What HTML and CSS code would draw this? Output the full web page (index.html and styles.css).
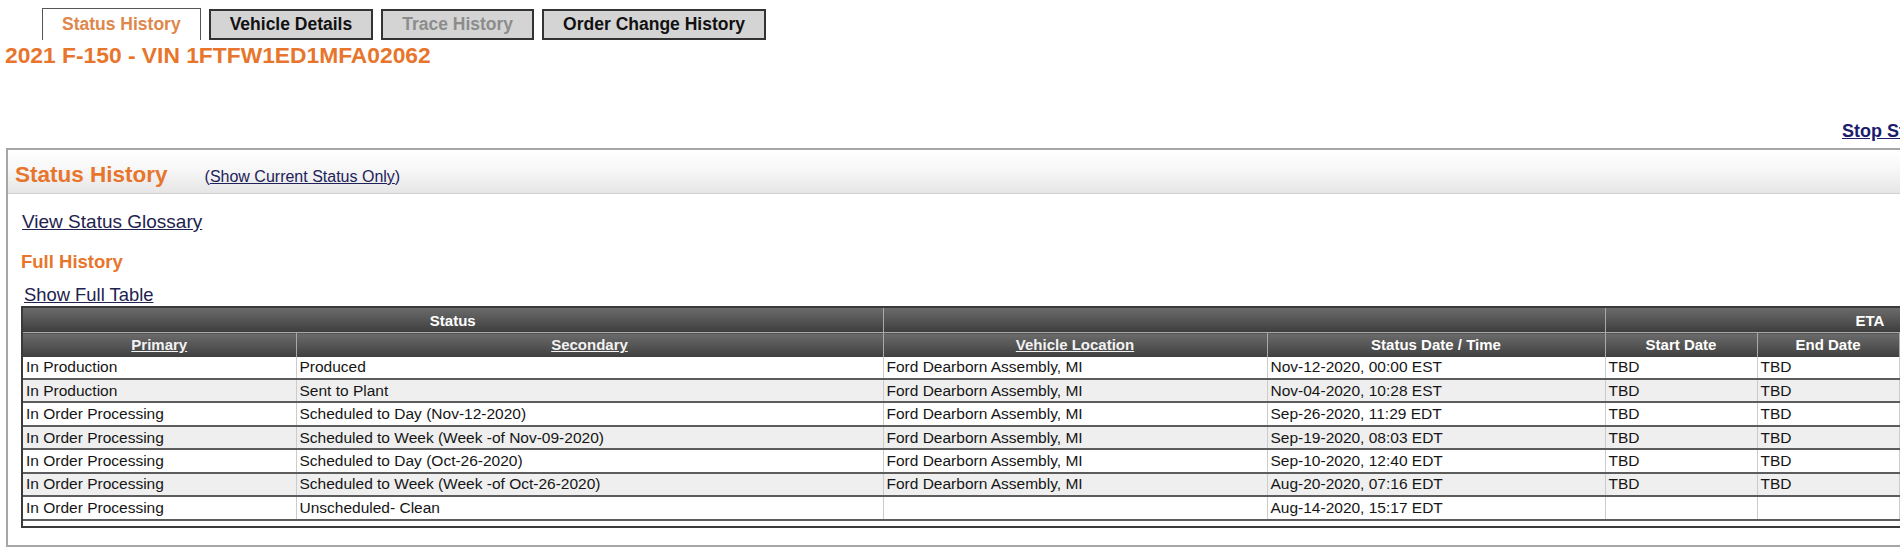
FILE: index.html
```html
<!DOCTYPE html>
<html lang="en">
<head>
<meta charset="utf-8">
<title>Status History</title>
<link rel="stylesheet" href="styles.css">
</head>
<body>
<div class="page">
  <nav class="tabs">
    <a class="tab tab-active" href="#">Status History</a>
    <a class="tab" href="#">Vehicle Details</a>
    <a class="tab tab-disabled" href="#">Trace History</a>
    <a class="tab" href="#">Order Change History</a>
  </nav>
  <h1 class="title">2021 F-150 - VIN 1FTFW1ED1MFA02062</h1>
  <div class="toplinks"><a class="stop" href="#">Stop Status Updates</a></div>
  <section class="panel">
    <header class="panel-head">
      <h2 class="panel-title">Status History</h2>
      <span class="current">(<a href="#">Show Current Status Only</a>)</span>
    </header>
    <div class="panel-body">
      <a class="glossary" href="#">View Status Glossary</a>
      <h3 class="sub-title">Full History</h3>
      <a class="fulltable" href="#">Show Full Table</a>
      <div class="table-wrap">
        <table class="hist">
          <colgroup>
            <col class="c-primary"><col class="c-secondary"><col class="c-loc"><col class="c-date"><col class="c-start"><col class="c-end"><col class="c-extra">
          </colgroup>
          <thead>
            <tr class="hrow1">
              <th colspan="2">Status</th>
              <th colspan="2"></th>
              <th colspan="3">ETA</th>
            </tr>
            <tr class="hrow2">
              <th><a href="#">Primary</a></th>
              <th><a href="#">Secondary</a></th>
              <th><a href="#">Vehicle Location</a></th>
              <th>Status Date / Time</th>
              <th>Start Date</th>
              <th>End Date</th>
              <th>Reason</th>
            </tr>
          </thead>
          <tbody>
            <tr><td>In Production</td><td>Produced</td><td>Ford Dearborn Assembly, MI</td><td>Nov-12-2020, 00:00 EST</td><td>TBD</td><td>TBD</td><td></td></tr>
            <tr><td>In Production</td><td>Sent to Plant</td><td>Ford Dearborn Assembly, MI</td><td>Nov-04-2020, 10:28 EST</td><td>TBD</td><td>TBD</td><td></td></tr>
            <tr><td>In Order Processing</td><td>Scheduled to Day (Nov-12-2020)</td><td>Ford Dearborn Assembly, MI</td><td>Sep-26-2020, 11:29 EDT</td><td>TBD</td><td>TBD</td><td></td></tr>
            <tr><td>In Order Processing</td><td>Scheduled to Week (Week -of Nov-09-2020)</td><td>Ford Dearborn Assembly, MI</td><td>Sep-19-2020, 08:03 EDT</td><td>TBD</td><td>TBD</td><td></td></tr>
            <tr><td>In Order Processing</td><td>Scheduled to Day (Oct-26-2020)</td><td>Ford Dearborn Assembly, MI</td><td>Sep-10-2020, 12:40 EDT</td><td>TBD</td><td>TBD</td><td></td></tr>
            <tr><td>In Order Processing</td><td>Scheduled to Week (Week -of Oct-26-2020)</td><td>Ford Dearborn Assembly, MI</td><td>Aug-20-2020, 07:16 EDT</td><td>TBD</td><td>TBD</td><td></td></tr>
            <tr><td>In Order Processing</td><td>Unscheduled- Clean</td><td></td><td>Aug-14-2020, 15:17 EDT</td><td></td><td></td><td></td></tr>
          </tbody>
        </table>
        <div class="export">Export to Excel</div>
      </div>
    </div>
  </section>
</div>
</body>
</html>
```

FILE: styles.css
```css
html, body {
  margin: 0;
  padding: 0;
  overflow: hidden;
  background: #ffffff;
}

body {
  font-family: "Liberation Sans", Arial, sans-serif;
  color: #111111;
}

.page {
  width: 2160px;
}

/* Tabs */
.tabs {
  display: flex;
  align-items: flex-end;
  gap: 8px;
  padding: 8px 0 0 42px;
  height: 40px;
  box-sizing: border-box;
}

.tab {
  display: block;
  box-sizing: border-box;
  height: 31px;
  padding: 0 19px;
  border: 2px solid #333333;
  background: #d4d4d4;
  color: #111111;
  font-weight: bold;
  font-size: 17.5px;
  line-height: 27px;
  text-decoration: none;
  white-space: nowrap;
}

.tab-active {
  height: 32px;
  padding: 0 19px;
  border: 1px solid #555555;
  border-bottom: none;
  background: #ffffff;
  color: #e0864a;
  line-height: 31px;
}

.tab-disabled {
  color: #8c8c8c;
}

/* Title */
.title {
  margin: 2px 0 0 5px;
  font-size: 22.8px;
  line-height: 26px;
  font-weight: bold;
  color: #e8752c;
  white-space: nowrap;
}

.toplinks {
  margin-top: 53px;
  padding-left: 1842px;
  height: 20px;
  line-height: 20px;
}

.stop {
  font-size: 18px;
  font-weight: bold;
  color: #1c1c6c;
  white-space: nowrap;
}

/* Panel */
.panel {
  margin: 7px 0 0 6px;
  border: 2px solid #a6a6a6;
  border-right: none;
}

.panel-head {
  display: flex;
  align-items: baseline;
  gap: 37px;
  padding: 11px 0 4px 7px;
  border-bottom: 1px solid #cfcfcf;
  background: linear-gradient(#ffffff 0%, #f7f7f7 45%, #e6e6e6 100%);
}

.panel-title {
  margin: 0;
  font-size: 22.5px;
  line-height: 28px;
  font-weight: bold;
  color: #e8752c;
}

.current {
  font-size: 16px;
  color: #22225a;
}

.current a {
  color: #22225a;
}

.panel-body {
  display: flex;
  flex-direction: column;
  align-items: flex-start;
  padding: 17px 0 17px 13px;
}

.glossary {
  font-size: 19px;
  line-height: 22px;
  color: #22224e;
  margin-left: 1px;
}

.sub-title {
  margin: 18px 0 0 0;
  font-size: 18.5px;
  line-height: 22px;
  font-weight: bold;
  color: #e8752c;
}

.fulltable {
  margin: 12px 0 0 3px;
  font-size: 18.4px;
  line-height: 20px;
  color: #22224e;
}

/* Table */
.table-wrap {
  margin-top: 1px;
  box-sizing: border-box;
  height: 222px;
  border: 2px solid #3a3a3a;
  overflow: hidden;
}

.hist {
  border-collapse: collapse;
  table-layout: fixed;
  width: 2112px;
  font-size: 15.5px;
}

.c-primary { width: 273px; }
.c-secondary { width: 587px; }
.c-loc { width: 384px; }
.c-date { width: 338px; }
.c-start { width: 152px; }
.c-end { width: 142px; }
.c-extra { width: 236px; }

.hist th {
  color: #ffffff;
  font-size: 15px;
  font-weight: bold;
  text-align: center;
  padding: 0;
  background: linear-gradient(#6b6b6b 0%, #555555 50%, #3e3e3e 100%);
  border-left: 1px solid #a9a9a9;
  border-right: 1px solid #a9a9a9;
  white-space: nowrap;
}

.hist th:first-child {
  border-left: none;
}

.hrow1 th {
  height: 24px;
  border-bottom: 1px solid #a9a9a9;
}

.hrow2 th {
  height: 23.5px;
}

.hist th a {
  color: #f2f2f2;
}

.hist td {
  height: 21.45px;
  padding: 0 3px;
  border-left: 1px solid #cccccc;
  border-right: 1px solid #cccccc;
  border-bottom: 2px solid #5c5c5c;
  white-space: nowrap;
  overflow: hidden;
  color: #151515;
}

.hist td:first-child {
  border-left: none;
}

.hist tbody tr:nth-child(even) td {
  background: #efefef;
}

.hist tbody tr:nth-child(odd) td {
  background: #ffffff;
}

.export {
  padding: 2px 0 0 2px;
  font-size: 15.5px;
  line-height: 18px;
  color: #151515;
}
```
